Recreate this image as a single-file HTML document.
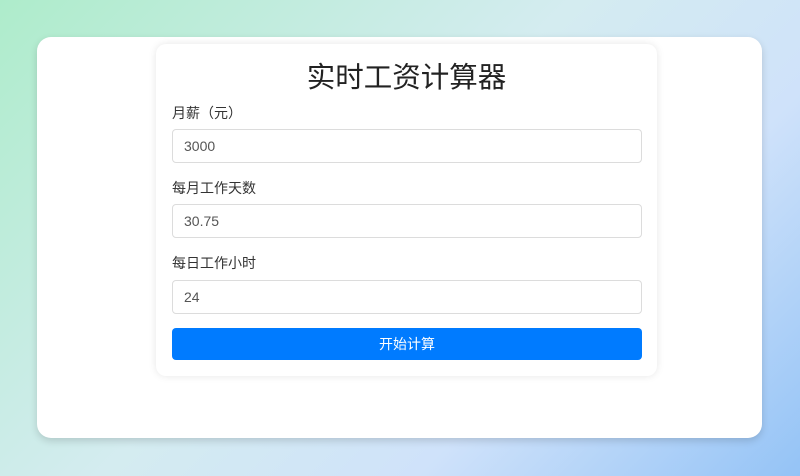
<!DOCTYPE html>
<html><head><meta charset="utf-8"><style>
*{box-sizing:border-box;margin:0;padding:0}
body{width:800px;height:476px;overflow:hidden;background:linear-gradient(135deg,#aeeccb 0%,#d4ecf0 45%,#cfe2fa 70%,#94c3f6 100%);font-family:"Liberation Sans","Noto Sans CJK SC",sans-serif;position:relative}
.outer{position:absolute;left:37px;top:37px;width:725px;height:401px;background:#fff;border-radius:14px;box-shadow:0 3px 8px rgba(0,0,0,.15)}
.inner{position:absolute;left:156px;top:44px;width:501px;height:332px;background:#fff;border-radius:10px;box-shadow:0 0 8px rgba(0,0,0,.1)}
h1{position:absolute;left:156px;width:501px;top:60px;text-align:center;font-size:28.5px;font-weight:normal;color:#222;line-height:36px}
.lbl{position:absolute;left:172px;font-size:14px;color:#333;line-height:20px}
.inp{position:absolute;left:172px;width:470px;height:34px;border:1px solid #dcdcdc;border-radius:4px;font-size:14px;color:#555;padding-left:11px;line-height:32px}
.btn{position:absolute;left:172px;top:328px;width:470px;height:32px;background:#007bff;border-radius:4px;color:#fff;font-size:14px;text-align:center;line-height:32px}
</style></head><body>
<div class="outer"></div>
<div class="inner"></div>
<h1>实时工资计算器</h1>
<div class="lbl" style="top:103px">月薪（元）</div>
<div class="inp" style="top:129px">3000</div>
<div class="lbl" style="top:178px">每月工作天数</div>
<div class="inp" style="top:204px">30.75</div>
<div class="lbl" style="top:253px">每日工作小时</div>
<div class="inp" style="top:280px">24</div>
<div class="btn">开始计算</div>
</body></html>
